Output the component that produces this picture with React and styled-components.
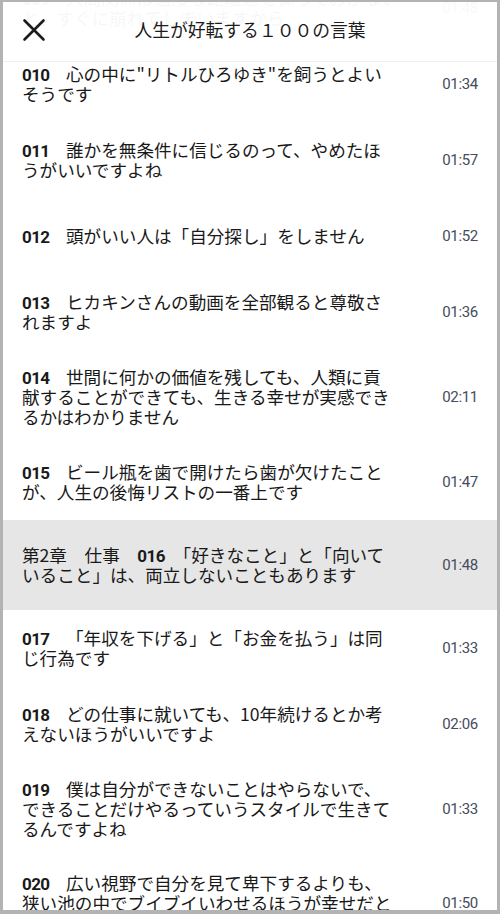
import React from "react";
import styled, { createGlobalStyle } from "styled-components";

const GlobalStyle = createGlobalStyle`
  html, body {
    margin: 0;
    padding: 0;
    background: #ffffff;
  }
  body {
    font-family: "Noto Sans CJK JP", "Noto Sans", sans-serif;
  }
`;

const chapters = [
  {
    num: "009",
    lines: ["人間関係は適度な距離感を保っておかない", "と、すぐに崩れてしまいますから"],
    time: "01:48",
  },
  {
    num: "010",
    lines: ["心の中に\"リトルひろゆき\"を飼うとよい", "そうです"],
    time: "01:34",
  },
  {
    num: "011",
    lines: ["誰かを無条件に信じるのって、やめたほ", "うがいいですよね"],
    time: "01:57",
  },
  { num: "012", lines: ["頭がいい人は「自分探し」をしません"], time: "01:52" },
  {
    num: "013",
    lines: ["ヒカキンさんの動画を全部観ると尊敬さ", "れますよ"],
    time: "01:36",
  },
  {
    num: "014",
    lines: [
      "世間に何かの価値を残しても、人類に貢",
      "献することができても、生きる幸せが実感でき",
      "るかはわかりません",
    ],
    time: "02:11",
  },
  {
    num: "015",
    lines: ["ビール瓶を歯で開けたら歯が欠けたこと", "が、人生の後悔リストの一番上です"],
    time: "01:47",
  },
  {
    prefix: "第2章　仕事　",
    num: "016",
    lines: ["「好きなこと」と「向いて", "いること」は、両立しないこともあります"],
    time: "01:48",
    active: true,
  },
  {
    num: "017",
    lines: ["「年収を下げる」と「お金を払う」は同", "じ行為です"],
    time: "01:33",
  },
  {
    num: "018",
    lines: ["どの仕事に就いても、10年続けるとか考", "えないほうがいいですよ"],
    time: "02:06",
  },
  {
    num: "019",
    lines: [
      "僕は自分ができないことはやらないで、",
      "できることだけやるっていうスタイルで生きて",
      "るんですよね",
    ],
    time: "01:33",
  },
  {
    num: "020",
    lines: [
      "広い視野で自分を見て卑下するよりも、",
      "狭い池の中でブイブイいわせるほうが幸せだと",
      "思います",
    ],
    time: "01:50",
  },
];

const CloseIcon = () => (
  <svg width="26" height="26" viewBox="0 0 26 26" fill="none">
    <path
      d="M3.5 3.5 L22.5 22.5 M22.5 3.5 L3.5 22.5"
      stroke="#1c1c1c"
      strokeWidth="2.6"
      strokeLinecap="round"
    />
  </svg>
);

const ChapterRow = ({ item }) => {
  return (
    <Row $active={item.active}>
      <Title>
        {item.lines.map((line, i) => (
          <Line key={i}>
            {i === 0 && item.prefix}
            {i === 0 && <Num $inline={!!item.prefix}>{item.num}</Num>}
            {i === 0 && item.prefix && "　"}
            {line}
          </Line>
        ))}
      </Title>
      <Time>{item.time}</Time>
    </Row>
  );
};

const App = () => {
  return (
    <>
      <GlobalStyle />
      <Frame>
        <Header>
          <CloseButton aria-label="閉じる">
            <CloseIcon />
          </CloseButton>
          <HeaderTitle>人生が好転する１００の言葉</HeaderTitle>
          <span />
        </Header>
        <List>
          {chapters.map((item) => (
            <ChapterRow key={item.num} item={item} />
          ))}
        </List>
      </Frame>
    </>
  );
};

const Frame = styled.div`
  position: relative;
  width: 500px;
  height: 914px;
  box-sizing: border-box;
  border: 3px solid #b3b3b3;
  border-top-width: 2px;
  border-bottom-width: 4px;
  background: #ffffff;
  overflow: hidden;
`;

/* translucent bar: the scrolled list shows faintly through it */
const Header = styled.header`
  position: absolute;
  top: 0;
  left: 0;
  right: 0;
  z-index: 1;
  height: 60px;
  box-sizing: border-box;
  display: grid;
  grid-template-columns: 60px 1fr 60px;
  align-items: center;
  background: rgba(255, 255, 255, 0.965);
  border-bottom: 1px solid #efefef;
`;

const CloseButton = styled.button`
  margin: -4px 0 0;
  padding: 0 0 0 18px;
  border: none;
  background: none;
  display: flex;
  align-items: center;
  height: 26px;
  cursor: pointer;
`;

const HeaderTitle = styled.h1`
  margin: 0 0 5px;
  text-align: center;
  font-size: 17.8px;
  font-weight: 400;
  color: #1c1c1c;
`;

const List = styled.ul`
  list-style: none;
  margin: -32px 0 0;
  padding: 0;
`;

const Row = styled.li`
  display: flex;
  align-items: center;
  justify-content: space-between;
  box-sizing: border-box;
  min-height: 76px;
  padding: ${(p) => (p.$active ? "25px" : "17px")} 19px;
  background: ${(p) => (p.$active ? "#e6e6e6" : "transparent")};
`;

const Title = styled.div`
  font-size: 17.6px;
  line-height: 20px;
  color: #191919;
  white-space: nowrap;
`;

const Line = styled.div`
  height: 20px;
`;

const Num = styled.span`
  display: inline-block;
  min-width: ${(p) => (p.$inline ? "0" : "44px")};
  font-family: Roboto, "Noto Sans", sans-serif;
  font-weight: 700;
  font-size: 17px;
  letter-spacing: -0.6px;
  color: #1a1a1a;
`;

const Time = styled.span`
  font-family: Roboto, "Noto Sans", sans-serif;
  font-size: 15px;
  letter-spacing: -0.3px;
  color: #454c5c;
`;

export default App;
